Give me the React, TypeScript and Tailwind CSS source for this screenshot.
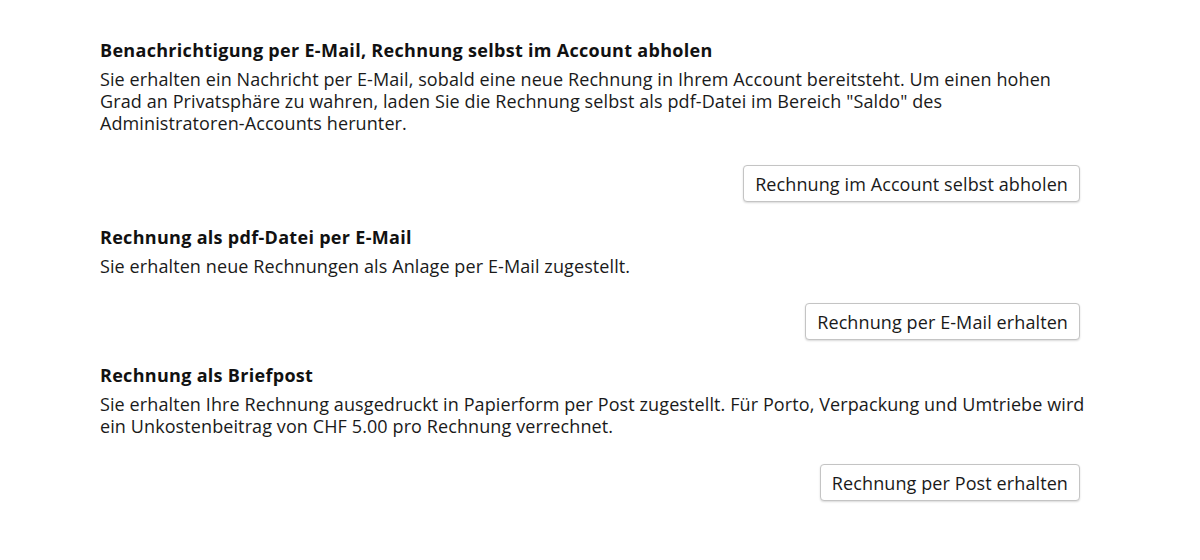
import React from "react";

type Option = {
  title: string;
  lines: string[];
  action: string;
  gap: string;
};

const options: Option[] = [
  {
    title: "Benachrichtigung per E-Mail, Rechnung selbst im Account abholen",
    lines: [
      "Sie erhalten ein Nachricht per E-Mail, sobald eine neue Rechnung in Ihrem Account bereitsteht. Um einen hohen",
      "Grad an Privatsphäre zu wahren, laden Sie die Rechnung selbst als pdf-Datei im Bereich \"Saldo\" des",
      "Administratoren-Accounts herunter.",
    ],
    action: "Rechnung im Account selbst abholen",
    gap: "mt-[31px]",
  },
  {
    title: "Rechnung als pdf-Datei per E-Mail",
    lines: ["Sie erhalten neue Rechnungen als Anlage per E-Mail zugestellt."],
    action: "Rechnung per E-Mail erhalten",
    gap: "mt-[26px]",
  },
  {
    title: "Rechnung als Briefpost",
    lines: [
      "Sie erhalten Ihre Rechnung ausgedruckt in Papierform per Post zugestellt. Für Porto, Verpackung und Umtriebe wird",
      "ein Unkostenbeitrag von CHF 5.00 pro Rechnung verrechnet.",
    ],
    action: "Rechnung per Post erhalten",
    gap: "mt-[27px]",
  },
];

export default function App(): JSX.Element {
  return (
    <div
      className="min-h-[560px] bg-white pt-[39px] text-[#1a1a1a]"
      style={{ fontFamily: "'Open Sans', 'Liberation Sans', sans-serif" }}
    >
      <div className="ml-[100px] w-[980px]">
        {options.map((o) => (
          <section key={o.title} className="mb-[24px]">
            <h2 className="text-[18px] font-bold leading-[22px] tracking-[0.3px] text-[#111]">{o.title}</h2>
            <p className="mt-[7px] text-[18px] leading-[22px] tracking-[0.1px]">
              {o.lines.map((l, i) => (
                <span key={i} className="block whitespace-nowrap">
                  {l}
                </span>
              ))}
            </p>
            <div className={`${o.gap} flex justify-end`}>
              <button className="h-[37px] rounded-[4px] border border-[#c4c4c4] bg-white px-[11px] text-[18px] leading-[22px] tracking-[0.1px] shadow-[0_1px_2px_rgba(0,0,0,0.15)]">
                {o.action}
              </button>
            </div>
          </section>
        ))}
      </div>
    </div>
  );
}
